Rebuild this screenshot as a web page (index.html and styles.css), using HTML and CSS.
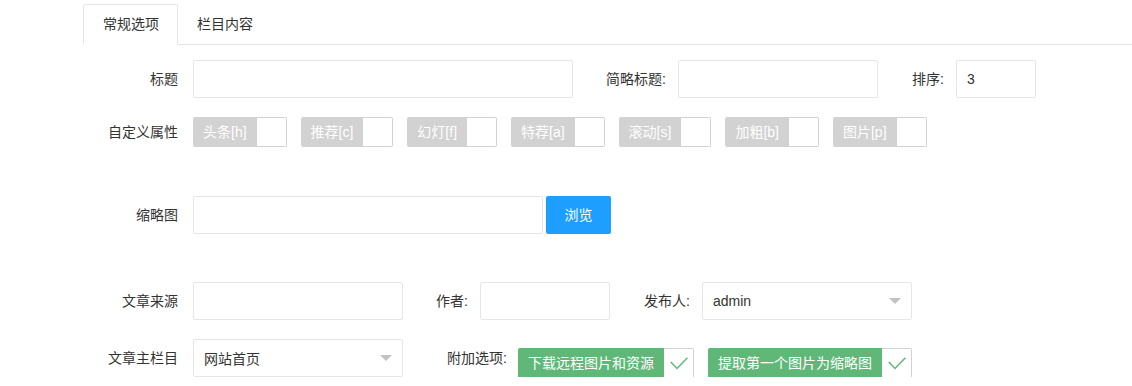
FILE: index.html
```html
<!DOCTYPE html>
<html lang="zh-CN">
<head>
<meta charset="utf-8">
<title>编辑文章</title>
<link rel="stylesheet" href="styles.css">
</head>
<body>
<div class="page">
  <ul class="tabs">
    <li class="tab active">常规选项</li>
    <li class="tab">栏目内容</li>
  </ul>
  <form class="tab-content">
    <div class="row row-1">
      <label class="label">标题</label>
      <input class="input w380" type="text">
      <label class="label-inline l-short">简略标题:</label>
      <input class="input w200" type="text">
      <label class="label-inline l-sort">排序:</label>
      <input class="input w80" type="text" value="3">
    </div>
    <div class="row row-2">
      <label class="label">自定义属性</label>
      <div class="checks checks-attr">
        <div class="cb"><span class="cb-text">头条[h]</span><i class="cb-box"></i></div>
        <div class="cb"><span class="cb-text">推荐[c]</span><i class="cb-box"></i></div>
        <div class="cb"><span class="cb-text">幻灯[f]</span><i class="cb-box"></i></div>
        <div class="cb"><span class="cb-text">特荐[a]</span><i class="cb-box"></i></div>
        <div class="cb"><span class="cb-text">滚动[s]</span><i class="cb-box"></i></div>
        <div class="cb"><span class="cb-text">加粗[b]</span><i class="cb-box"></i></div>
        <div class="cb"><span class="cb-text">图片[p]</span><i class="cb-box"></i></div>
      </div>
    </div>
    <div class="row row-3">
      <label class="label">缩略图</label>
      <input class="input w350" type="text">
      <button class="btn" type="button">浏览</button>
    </div>
    <div class="row row-4">
      <label class="label">文章来源</label>
      <input class="input w210" type="text">
      <label class="label-inline l-author">作者:</label>
      <input class="input w130" type="text">
      <label class="label-inline l-pub">发布人:</label>
      <div class="select w210"><span>admin</span><i class="edge"></i></div>
    </div>
    <div class="row row-5">
      <label class="label">文章主栏目</label>
      <div class="select w210"><span>网站首页</span><i class="edge"></i></div>
      <label class="label-inline l-extra">附加选项:</label>
      <div class="checks checks-extra">
        <div class="cb checked"><span class="cb-text">下载远程图片和资源</span><i class="cb-box"><svg width="18" height="13" viewBox="0 0 18 13"><polyline points="0.8,5 7,11.5 17.4,0.8" fill="none" stroke="#5FB878" stroke-width="1.5"/></svg></i></div>
        <div class="cb checked"><span class="cb-text">提取第一个图片为缩略图</span><i class="cb-box"><svg width="18" height="13" viewBox="0 0 18 13"><polyline points="0.8,5 7,11.5 17.4,0.8" fill="none" stroke="#5FB878" stroke-width="1.5"/></svg></i></div>
      </div>
    </div>
  </form>
</div>
</body>
</html>
```
FILE: styles.css
```css
html, body {
  margin: 0;
  padding: 0;
  background: #fff;
}
body {
  font-family: "Liberation Sans", "Noto Sans CJK SC", sans-serif;
  font-size: 14px;
  color: #333;
}
.page {
  padding: 4px 0 0 83px;
}
.tabs {
  display: flex;
  margin: 0;
  padding: 0;
  list-style: none;
  height: 40px;
  border-bottom: 1px solid #e6e6e6;
}
.tab {
  height: 40px;
  line-height: 40px;
  padding: 0 20px 0 19px;
  color: #333;
  white-space: nowrap;
}
.tab.active {
  box-sizing: border-box;
  height: 41px;
  line-height: 39px;
  padding: 0 18px 0 19px;
  border: 1px solid #e6e6e6;
  border-bottom-color: #fff;
  border-radius: 2px 2px 0 0;
  background: #fff;
  margin-bottom: -1px;
}
.tab-content {
  margin: 0;
  padding-top: 15px;
}
.row {
  display: flex;
  align-items: flex-start;
  height: 38px;
}
.row-1 { margin-bottom: 15px; }
.row-2 { margin-bottom: 45px; }
.row-3 { margin-bottom: 48px; }
.row-4 { margin-bottom: 19px; }
.label {
  box-sizing: border-box;
  width: 110px;
  padding: 9px 15px 9px 0;
  line-height: 20px;
  text-align: right;
  white-space: nowrap;
}
.label-inline {
  box-sizing: border-box;
  padding: 9px 12px 9px 0;
  line-height: 20px;
  text-align: right;
  white-space: nowrap;
}
.l-short { width: 105px; }
.l-sort { width: 78px; }
.l-author { width: 77px; }
.l-pub { width: 92px; }
.l-extra { width: 115px; padding-right: 11px; }
.input {
  box-sizing: border-box;
  height: 38px;
  margin: 0;
  padding: 0 10px;
  border: 1px solid #e6e6e6;
  border-radius: 2px;
  background: #fff;
  font: inherit;
  color: #333;
  outline: none;
}
.w380 { width: 380px; }
.w350 { width: 350px; }
.w210 { width: 210px; }
.w200 { width: 200px; }
.w130 { width: 130px; }
.w80 { width: 80px; }
.btn {
  box-sizing: border-box;
  width: 65px;
  height: 38px;
  margin: 0 0 0 3px;
  padding: 0;
  border: none;
  border-radius: 2px;
  background: #1E9FFF;
  color: #fff;
  font: inherit;
  line-height: 38px;
}
.select {
  box-sizing: border-box;
  height: 38px;
  display: flex;
  align-items: center;
  justify-content: space-between;
  padding: 0 10px;
  border: 1px solid #e6e6e6;
  border-radius: 2px;
  background: #fff;
  color: #333;
}
.edge {
  width: 0;
  height: 0;
  border-left: 6px solid transparent;
  border-right: 6px solid transparent;
  border-top: 6px solid #c2c2c2;
  margin-top: 0;
}
.checks {
  display: flex;
  gap: 14px;
}
.checks-attr { margin-top: 4px; }
.checks-extra { margin-top: 9px; }
.cb {
  display: flex;
  height: 30px;
  white-space: nowrap;
}
.cb-text {
  padding: 0 10px;
  height: 30px;
  line-height: 30px;
  background: #d2d2d2;
  color: #fff;
  border-radius: 2px 0 0 2px;
}
.cb-box {
  display: flex;
  align-items: center;
  justify-content: center;
  width: 29px;
  height: 28px;
  border: 1px solid #d2d2d2;
  border-left: none;
  border-radius: 0 2px 2px 0;
  background: #fff;
}
.cb.checked .cb-text {
  background: #5FB878;
}
.cb-box svg {
  display: block;
  margin-top: 1px;
}
```
